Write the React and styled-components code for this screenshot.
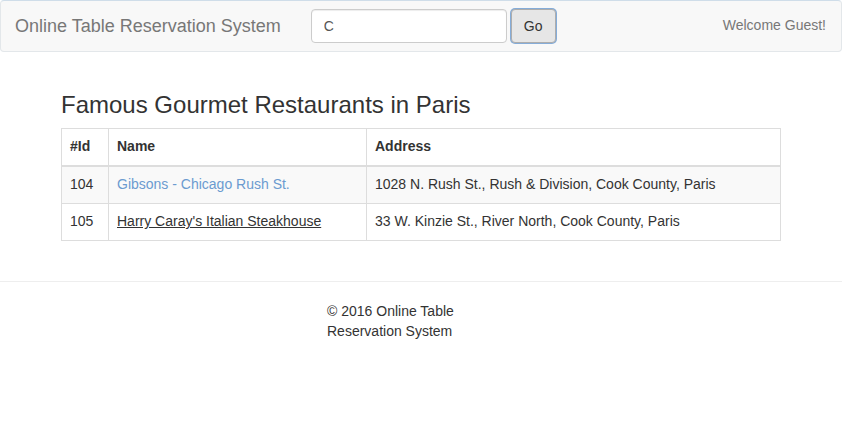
import React from "react";
import styled, { createGlobalStyle } from "styled-components";

const GlobalStyle = createGlobalStyle`
  * { box-sizing: border-box; }
  body {
    margin: 0;
    font-family: "Liberation Sans", Arial, Helvetica, sans-serif;
    font-size: 14px;
    line-height: 1.42857;
    color: #333;
    background: #fff;
  }
`;

const restaurants = [
  { id: 104, name: "Gibsons - Chicago Rush St.", address: "1028 N. Rush St., Rush & Division, Cook County, Paris", visited: false },
  { id: 105, name: "Harry Caray's Italian Steakhouse", address: "33 W. Kinzie St., River North, Cook County, Paris", visited: true },
];

const App = () => {
  return (
    <>
      <GlobalStyle />
      <Navbar>
        <Brand href="#">Online Table Reservation System</Brand>
        <SearchForm onSubmit={(e) => e.preventDefault()}>
          <SearchInput defaultValue="C" />
          <GoButton type="submit">Go</GoButton>
        </SearchForm>
        <Welcome>Welcome Guest!</Welcome>
      </Navbar>

      <Container>
        <Heading>Famous Gourmet Restaurants in Paris</Heading>
        <Table>
          <thead>
            <tr>
              <Th style={{ width: 47 }}>#Id</Th>
              <Th style={{ width: 258 }}>Name</Th>
              <Th>Address</Th>
            </tr>
          </thead>
          <tbody>
            {restaurants.map((r, i) => (
              <Row key={r.id} $striped={i % 2 === 0}>
                <Td>{r.id}</Td>
                <Td>
                  <NameLink href="#" $visited={r.visited}>{r.name}</NameLink>
                </Td>
                <Td>{r.address}</Td>
              </Row>
            ))}
          </tbody>
        </Table>
      </Container>

      <Divider />

      <Footer>© 2016 Online Table Reservation System</Footer>
    </>
  );
};

export default App;

const Navbar = styled.nav`
  display: flex;
  align-items: center;
  height: 52px;
  margin-bottom: 20px;
  background: #f8f8f8;
  border: 1px solid #e3e7ea;
  border-top-color: #cfdde9;
  border-radius: 4px;
`;

const Brand = styled.a`
  padding: 15px 15px 15px 14px;
  font-size: 18px;
  line-height: 20px;
  color: #777;
  text-decoration: none;
`;

const SearchForm = styled.form`
  display: flex;
  align-items: center;
  gap: 4px;
  padding: 0 15px;
`;

const SearchInput = styled.input`
  width: 196px;
  height: 34px;
  padding: 6px 12px;
  font-family: inherit;
  font-size: 14px;
  color: #555;
  background: #fff;
  border: 1px solid #ccc;
  border-radius: 4px;
  box-shadow: inset 0 1px 1px rgba(0, 0, 0, 0.075);
  outline: none;
`;

const GoButton = styled.button`
  height: 34px;
  padding: 6px 12px;
  font-family: inherit;
  font-size: 14px;
  color: #333;
  background: #e6e6e6;
  border: 1px solid #adadad;
  border-radius: 4px;
  box-shadow: 0 0 0 1px #85acd8;
`;

const Welcome = styled.p`
  margin: 0 15px 0 auto;
  color: #777;
`;

const Container = styled.div`
  display: flow-root;
  width: 720px;
  margin: 0 auto;
`;

const Heading = styled.h3`
  margin: 20px 0 10px;
  font-size: 24px;
  font-weight: 500;
  line-height: 1.1;
  color: #333;
`;

const Table = styled.table`
  width: 100%;
  margin-bottom: 20px;
  border-collapse: collapse;
  border: 1px solid #ddd;
`;

const Th = styled.th`
  padding: 8px;
  text-align: left;
  font-weight: bold;
  border: 1px solid #ddd;
  border-bottom-width: 2px;
`;

const Row = styled.tr`
  background: ${({ $striped }) => ($striped ? "#f9f9f9" : "#fff")};
`;

const Td = styled.td`
  padding: 8px;
  border: 1px solid #ddd;
`;

const NameLink = styled.a`
  color: ${({ $visited }) => ($visited ? "#333" : "#6b9bd0")};
  text-decoration: ${({ $visited }) => ($visited ? "underline" : "none")};
`;

const Divider = styled.hr`
  margin: 20px 0;
  border: 0;
  border-top: 1px solid #eee;
`;

const Footer = styled.footer`
  width: 188px;
  margin: 0 auto;
`;
